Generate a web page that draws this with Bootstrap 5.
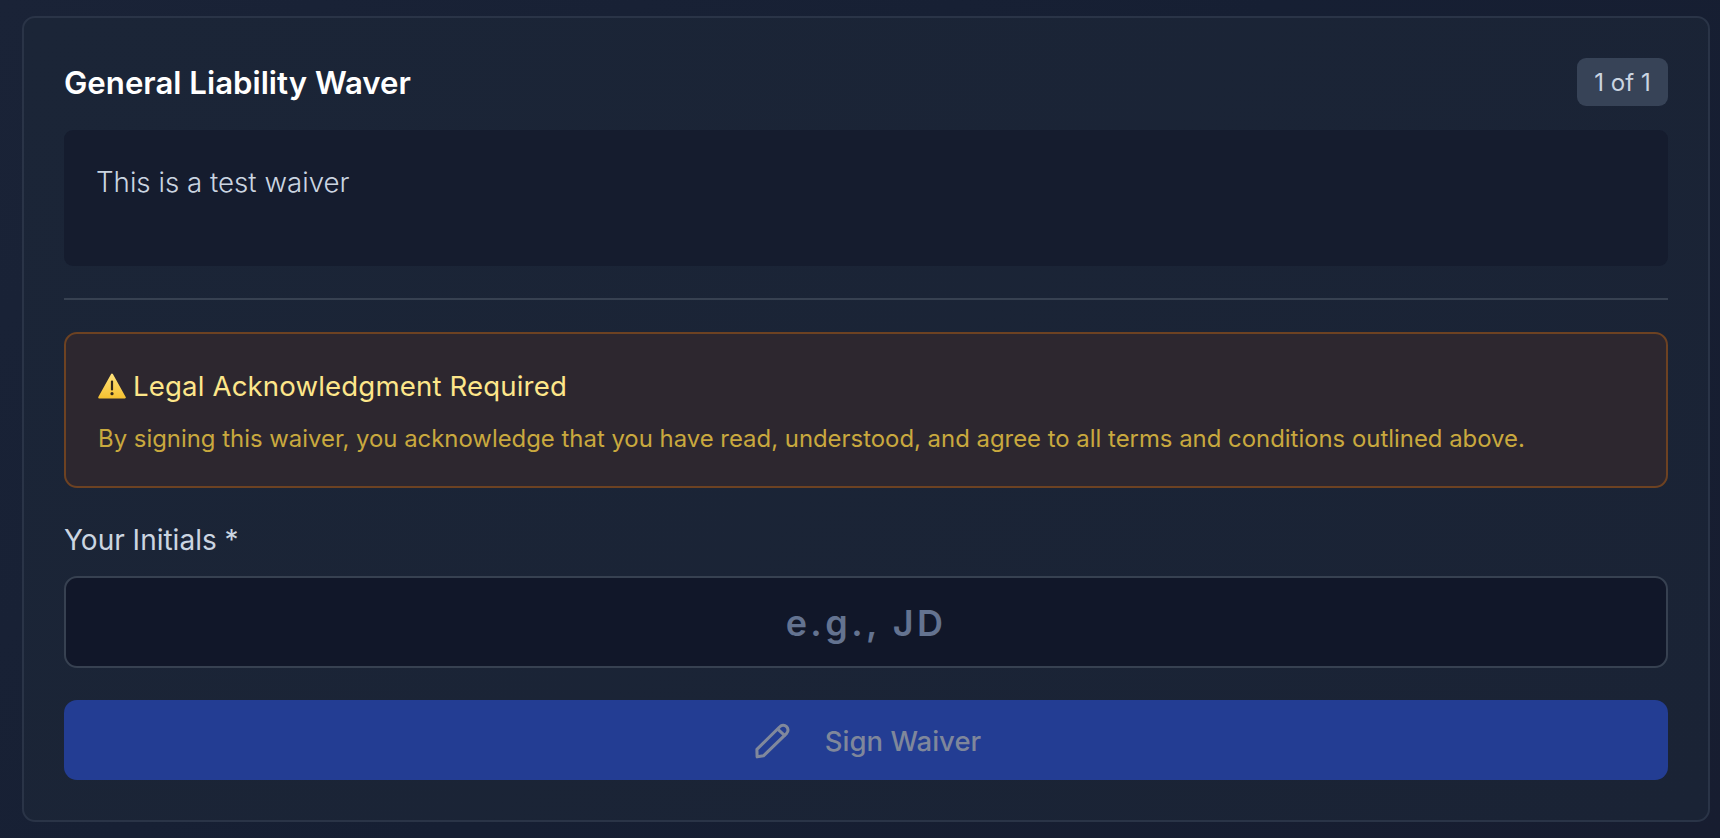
<!DOCTYPE html>
<html lang="en">
<head>
<meta charset="utf-8">
<title>General Liability Waver</title>
<link href="https://cdn.jsdelivr.net/npm/bootstrap@5.3.0/dist/css/bootstrap.min.css" rel="stylesheet">
<style>
html,body{height:100%}
body{margin:0;background:linear-gradient(135deg,#1a2337 0%,#161f33 50%,#171d30 100%);font-family:Inter,"Liberation Sans",sans-serif;overflow:hidden}
.page-shell{padding:16px 10px 16px 22px;height:838px}
.waiver-panel{height:806px;background:linear-gradient(135deg,#1b2537 0%,#1a2335 100%);border:2px solid #2a3447;border-radius:13px;padding:40px 40px 39px 40px;display:flex;flex-direction:column}
.waiver-head{height:50px;margin-top:-1px;margin-bottom:1px}
.waiver-title{font-size:31.2px;font-weight:600;color:#fff;margin:0;line-height:1.2;padding-top:4px}
.count-chip{background:#374357;color:#cbd5e1;font-weight:400;border-radius:9px;height:48px;line-height:50px;width:91px;white-space:nowrap;text-align:center;font-size:24px}
.text-box{background:#151c2e;border-radius:9px;height:136px;padding:36px 32px 0;margin-top:22px;color:#cbd5e1;font-size:27.7px;line-height:32px;font-weight:300}
.rule-line{height:2px;background:#374151;margin:32px 0}
.legal-note{background:#2d272f;border:2px solid #6d4222;border-radius:13px;height:156px;padding:36px 32px 0}
.legal-head{color:#fde68a;font-size:27.6px;font-weight:400;letter-spacing:.15px;line-height:32px;margin:0 0 22px;display:flex;align-items:center;gap:7px}
.legal-copy{color:#c9a93e;font-size:23.9px;line-height:30px;font-weight:400;margin:0;white-space:nowrap}
.field-label{color:#cbd5e1;font-size:28px;font-weight:400;line-height:32px;margin:36px 0 20px;display:block}
.initials-input{display:block;width:100%;height:92px;background:#111729;border:2px solid #374151;border-radius:13px;text-align:center;font-size:36px;font-weight:600;letter-spacing:3.4px;color:#64748b;outline:0;padding-top:2px}
.initials-input::placeholder{color:#647390;opacity:1}
.sign-btn{height:80px;margin-top:32px;background:#233d93;border:0;border-radius:13px;color:#7f879b;font-size:27.5px;font-weight:500;display:flex;align-items:center;justify-content:center;gap:32px;width:100%;padding:4px 0 0 4px}
.sign-btn svg{margin-top:-2px}
.sign-btn:disabled{background:#233d93;color:#7f879b;opacity:1}
</style>
</head>
<body>
<div class="page-shell">
  <div class="waiver-panel">
    <div class="waiver-head d-flex justify-content-between align-items-center">
      <h5 class="waiver-title">General Liability Waver</h5>
      <span class="count-chip">1 of 1</span>
    </div>
    <div class="text-box">This is a test waiver</div>
    <div class="rule-line"></div>
    <div class="legal-note">
      <p class="legal-head">
        <svg width="28" height="26" viewBox="0 0 28 26" aria-hidden="true"><defs><linearGradient id="warnfill" x1="0" y1="0" x2="0" y2="1"><stop offset="0" stop-color="#ffe27a"/><stop offset="1" stop-color="#f6c233"/></linearGradient></defs><path d="M14 1.5 L26.8 24.5 H1.2 Z" fill="url(#warnfill)" stroke="url(#warnfill)" stroke-width="2" stroke-linejoin="round"/><rect x="12.9" y="7.5" width="2.2" height="10" rx="1" fill="#33291c"/><circle cx="14" cy="20.7" r="1.6" fill="#33291c"/></svg>
        <span>Legal Acknowledgment Required</span>
      </p>
      <p class="legal-copy">By signing this waiver, you acknowledge that you have read, understood, and agree to all terms and conditions outlined above.</p>
    </div>
    <label class="field-label" for="initials">Your Initials *</label>
    <input id="initials" class="initials-input" type="text" placeholder="e.g., JD">
    <button class="sign-btn btn" type="button" disabled>
      <svg width="38" height="38" viewBox="0 0 36 36" fill="none" stroke="#80889c" stroke-width="2.9" stroke-linecap="round" stroke-linejoin="round" aria-hidden="true"><path d="M1.8 26 L23.5 4.5 a4.4 4.4 0 0 1 6.5 6.2 L8 32 L2 33 Z"/><path d="M21.8 7 L28 12.6"/></svg>
      <span>Sign Waiver</span>
    </button>
  </div>
</div>
<script src="https://cdn.jsdelivr.net/npm/bootstrap@5.3.0/dist/js/bootstrap.bundle.min.js"></script>
</body>
</html>
